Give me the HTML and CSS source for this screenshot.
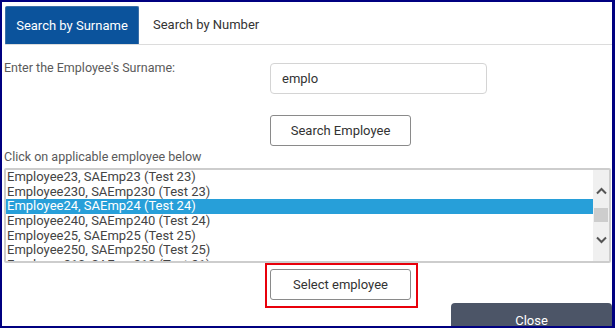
FILE: index.html
```html
<!DOCTYPE html>
<html lang="en">
<head>
    <meta charset="UTF-8">
    <meta name="viewport" content="width=device-width, initial-scale=1.0">
    <title>Find Employee</title>
    <link rel="stylesheet" href="styles.css">
</head>
<body>
    <div class="frame">
        <div class="tabs">
            <div class="tab active">Search by Surname</div>
            <div class="tab">Search by Number</div>
        </div>

        <div class="search-grid">
            <label class="field-label" for="surname">Enter the Employee's Surname:</label>
            <input type="text" id="surname" class="text-input" value="emplo">
            <span></span>
            <button class="btn search-btn">Search Employee</button>
        </div>

        <div class="list-label">Click on applicable employee below</div>

        <div class="listbox">
            <div class="list-items">
                <div class="item">Employee23, SAEmp23 (Test 23)</div>
                <div class="item">Employee230, SAEmp230 (Test 23)</div>
                <div class="item selected">Employee24, SAEmp24 (Test 24)</div>
                <div class="item">Employee240, SAEmp240 (Test 24)</div>
                <div class="item">Employee25, SAEmp25 (Test 25)</div>
                <div class="item">Employee250, SAEmp250 (Test 25)</div>
                <div class="item">Employee210, SAEmp210 (Test 21)</div>
            </div>
            <div class="scrollbar">
                <svg class="arrow up" width="11" height="8" viewBox="0 0 11 8">
                    <polyline points="1,6.5 5.5,2 10,6.5" fill="none" stroke="#555" stroke-width="2"/>
                </svg>
                <div class="thumb"></div>
                <svg class="arrow down" width="11" height="8" viewBox="0 0 11 8">
                    <polyline points="1,1.5 5.5,6 10,1.5" fill="none" stroke="#555" stroke-width="2"/>
                </svg>
            </div>
        </div>

        <div class="footer">
            <div class="highlight">
                <button class="btn select-btn">Select employee</button>
            </div>
            <button class="close-btn">Close</button>
        </div>
    </div>
</body>
</html>
```

FILE: styles.css
```css
html, body {
    margin: 0;
    padding: 0;
    background-color: white;
}
body {
    font-family: Roboto, "Liberation Sans", sans-serif;
    color: #444;
}
.frame {
    box-sizing: border-box;
    width: 615px;
    height: 328px;
    border: 2px solid #000080;
    border-right-width: 3px;
    overflow: hidden;
    padding: 0 0 0 2px;
}
.tabs {
    display: flex;
    margin: 4px 0 0 1px;
    border-bottom: 1px solid #dcdcdc;
}
.tab {
    height: 38px;
    line-height: 38px;
    padding: 0 14px;
    font-size: 13px;
    color: #333;
    box-sizing: border-box;
}
.tab.active {
    background-color: #0b539c;
    color: white;
    border: 1px solid #3b6fa8;
    border-bottom: none;
    border-radius: 2px 2px 0 0;
    width: 134px;
    padding: 0;
    text-align: center;
}
.search-grid {
    display: grid;
    grid-template-columns: 266px 217px;
    row-gap: 21px;
    margin-top: 18px;
}
.field-label {
    font-size: 12.5px;
    color: #5a5a5a;
    margin-top: -3px;
}
.text-input {
    box-sizing: border-box;
    height: 31px;
    border: 1px solid #d4d4d4;
    border-radius: 4px;
    padding: 0 11px;
    font-family: Roboto, "Liberation Sans", sans-serif;
    font-size: 13px;
    color: #333;
    outline: none;
}
.btn {
    box-sizing: border-box;
    width: 141px;
    height: 31px;
    background-color: white;
    border: 1px solid #8a8a8a;
    border-radius: 3px;
    font-family: Roboto, "Liberation Sans", sans-serif;
    font-size: 13px;
    color: #333;
    padding: 0;
}
.list-label {
    font-size: 12.5px;
    color: #5a5a5a;
    margin-top: 2px;
    line-height: 17px;
}
.listbox {
    display: flex;
    box-sizing: border-box;
    width: 607px;
    height: 95px;
    margin-top: 3px;
    border: 2px solid #cdcdcd;
    border-radius: 2px;
    overflow: hidden;
}
.list-items {
    flex: 1;
    overflow: hidden;
}
.item {
    height: 14.67px;
    line-height: 14.67px;
    padding-left: 1px;
    font-size: 13px;
    color: #444;
    white-space: nowrap;
}
.item.selected {
    background-color: #279fd9;
    color: white;
}
.scrollbar {
    width: 16px;
    background-color: #f0f0f0;
    display: flex;
    flex-direction: column;
    align-items: center;
}
.arrow.up {
    margin-top: 17px;
}
.thumb {
    width: 14px;
    height: 14px;
    background-color: #cdcdcd;
    margin-top: 13px;
}
.arrow.down {
    margin-top: 14px;
}
.footer {
    display: flex;
    align-items: flex-start;
}
.highlight {
    margin-left: 261px;
    border: 2px solid #e8000b;
    padding: 4px 5px 6px 3px;
}
.close-btn {
    margin-left: auto;
    margin-top: 40px;
    width: 161px;
    height: 34px;
    background-color: #4c5567;
    color: white;
    border: none;
    border-radius: 4px 4px 0 0;
    font-family: Roboto, "Liberation Sans", sans-serif;
    font-size: 13px;
    padding: 0;
}
```
